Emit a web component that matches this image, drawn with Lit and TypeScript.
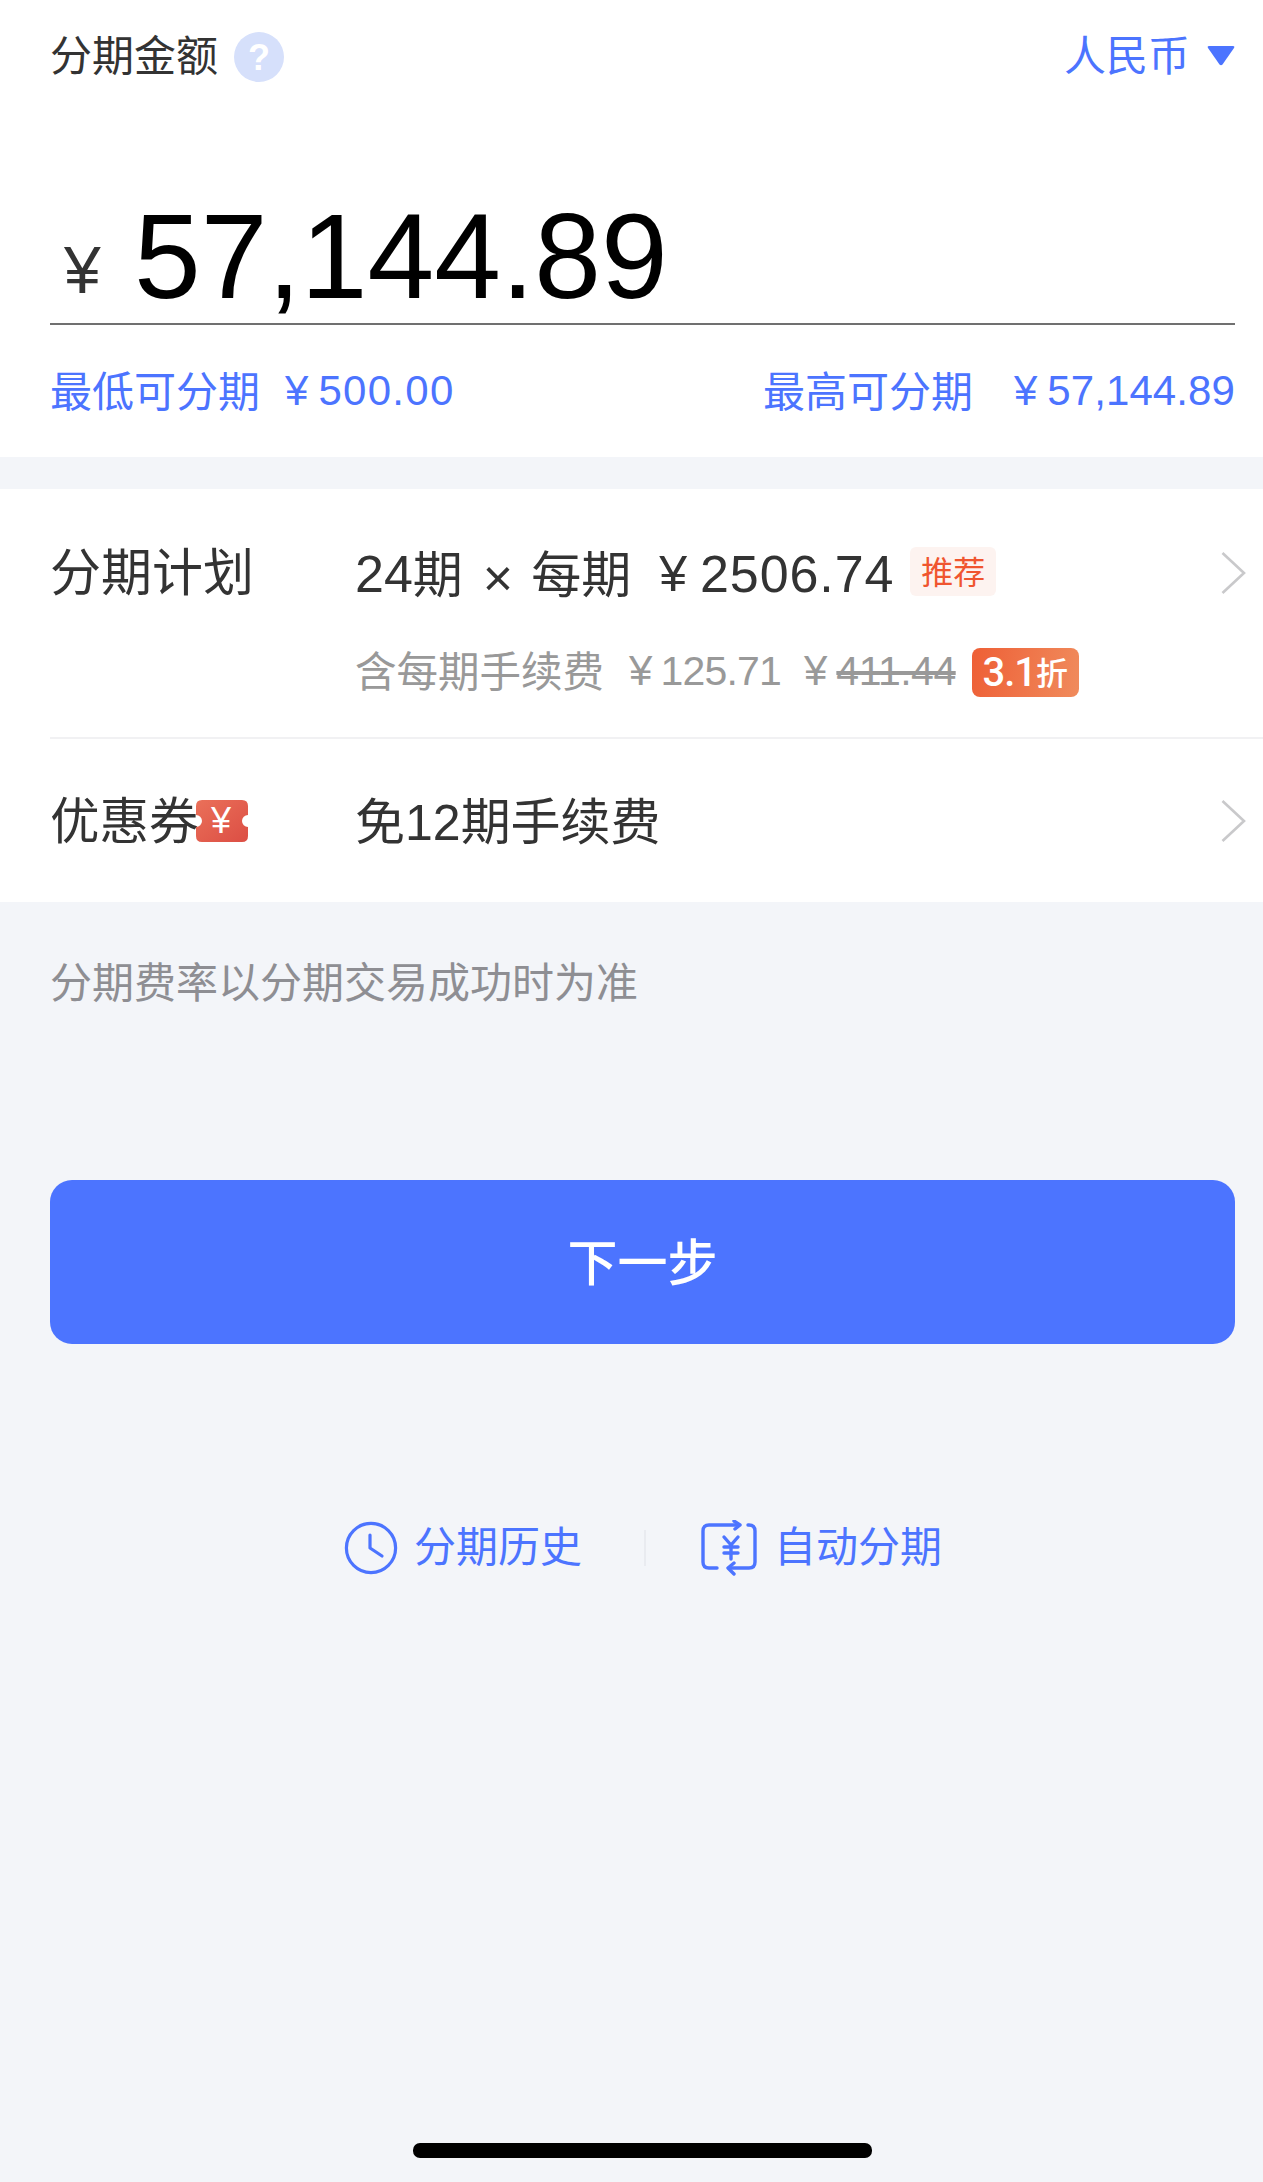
import { LitElement, html, css } from "lit";
import { customElement } from "lit/decorators.js";

const chevron = html`<svg class="chev" width="28" height="44" viewBox="0 0 28 44"><path d="M3.5 2 L25 22 L3.5 42" fill="none" stroke="#c9c9cb" stroke-width="2.6"/></svg>`;

@customElement("app-root")
export class AppRoot extends LitElement {
  static styles = css`
    :host { display: block; width: 1263px; height: 2182px; overflow: hidden; background: #f3f5f9; color: #333;
      font-family: "Liberation Sans", "Noto Sans CJK SC", sans-serif; position: relative; }
    .cjk { font-family: "Noto Sans CJK SC", sans-serif; }
    .u { padding-bottom: .11em; }
    .top { background: #fff; height: 457px; padding: 0 28px 0 50px; box-sizing: border-box; }
    .head { height: 110px; display: flex; align-items: center; justify-content: space-between; font-size: 42px; }
    .head-l { display: flex; align-items: center; gap: 16px; }
    .head-l svg { margin-top: 4px; }
    .head-r { display: flex; align-items: center; gap: 17px; color: #4c74ff; }
    .head-r svg { margin-top: 3px; }
    .amount { display: flex; align-items: flex-start; padding-top: 86px; padding-bottom: 7px; border-bottom: 2px solid #707070; line-height: 120px; }
    .yen { font-size: 66px; width: 84px; margin-top: 41px; padding-left: 14px; box-sizing: border-box; color: #333; line-height: 1; }
    .num { font-size: 120px; color: #000; }
    .range { display: flex; justify-content: space-between; color: #4c74ff; font-size: 42px; line-height: 60px; padding-top: 36px; }
    .range-part { display: flex; align-items: center; height: 60px; }
    .ml { margin-right: 25px; }
    .mh { margin-right: 41px; }
    .ds { letter-spacing: 1.3px; }
    .dh { letter-spacing: 0.1px; }
    .yen-s { margin-right: 10px; }
    .panel { background: #fff; margin-top: 32px; height: 413px; display: flex; flex-direction: column; }
    .row { display: grid; grid-template-columns: 305px 1fr 44px; margin-left: 50px; box-sizing: border-box; }
    .plan { height: 250px; border-bottom: 2px solid #f1f1f3; padding-top: 50px; }
    .coupon { flex: 1; align-items: center; }
    .label { font-size: 49.5px; line-height: 64px; display: flex; align-items: center; }
    .plan .label { align-self: start; margin-top: -2px; font-size: 51px; }
    .ticket { margin-left: -3px; }
    .line1 { display: flex; align-items: center; font-size: 52px; line-height: 70px; height: 70px; }
    .c50 { font-size: 50px; }
    .x { margin: 0 18px 0 20px; padding-top: 8px; }
    .y1 { margin: 0 13px 0 28px; font-size: 50px; }
    .amt1 { letter-spacing: 0.9px; }
    .tag { margin: 0 0 5px 16px; background: #fdf3f0; color: #f0552f; font-size: 32px; line-height: 47px; height: 49px; width: 86px; text-align: center; border-radius: 6px; }
    .line2 { display: flex; align-items: center; font-size: 42px; line-height: 60px; height: 60px; color: #999; margin-top: 32px; }
    .c2 { font-size: 41.5px; }
    .ya { margin: 0 8px 0 25px; }
    .yb { margin: 0 9px 0 23px; }
    .d2 { font-size: 41px; letter-spacing: -0.8px; }
    .s { text-decoration: line-through; letter-spacing: -0.5px; }
    .off { margin: 3px 0 0 16px; width: 107px; height: 49px; border-radius: 8px; color: #fff;
      background: linear-gradient(100deg, #ee5f36, #f08b5c); display: flex; align-items: center; justify-content: center; }
    .off-n { font-family: Roboto, sans-serif; font-size: 40px; font-weight: 500; letter-spacing: -1px; }
    .off-c { font-size: 32px; font-weight: 500; }
    .chev { align-self: start; }
    .plan .chev { margin-top: 12px; }
    .coupon .chev { align-self: center; }
    .val2 { font-size: 50px; color: #333; padding-bottom: 6px; }
    .note { font-size: 42px; color: #8e8e93; padding-left: 50px; line-height: 60px; margin-top: 48px; }
    .btn { margin: 170px 28px 0 50px; height: 164px; border-radius: 22px; background: #4c74ff; color: #fff;
      font-size: 50px; font-weight: 500; display: flex; align-items: center; justify-content: center; }
    .links { margin-top: 174px; padding-left: 344px; display: flex; align-items: center; color: #4c74ff; font-size: 42px; height: 60px; }
    .link { display: flex; align-items: center; }
    .link span { padding-bottom: .2em; }
    .g1 { gap: 16px; }
    .g2 { gap: 17px; }
    .sep { width: 2px; height: 36px; background: #e9ebf0; margin: 0 55px 0 62px; }
    .home { position: absolute; left: 413px; top: 2143px; width: 459px; height: 15px; background: #000; border-radius: 7px; }
  `;

  render() {
    return html`
      <section class="top">
        <div class="head">
          <div class="head-l cjk">
            <span class="u">分期金额</span>
            <svg width="50" height="50" viewBox="0 0 50 50"><circle cx="25" cy="25" r="25" fill="#d6e0fb"/><text x="25" y="38" text-anchor="middle" font-family="Liberation Sans" font-weight="700" font-size="36" fill="#fff">?</text></svg>
          </div>
          <div class="head-r cjk">
            <span class="u">人民币</span>
            <svg width="28" height="20" viewBox="0 0 28 20"><path d="M2 0 H26 Q28 0 27 2 L15.5 18.5 Q14 20 12.5 18.5 L1 2 Q0 0 2 0Z" fill="#4c74ff"/></svg>
          </div>
        </div>
        <div class="amount"><span class="yen">¥</span><span class="num">57,144.89</span></div>
        <div class="range">
          <div class="range-part"><span class="cjk u ml">最低可分期</span><span class="yen-s">¥</span><span class="ds">500.00</span></div>
          <div class="range-part"><span class="cjk u mh">最高可分期</span><span class="yen-s">¥</span><span class="dh">57,144.89</span></div>
        </div>
      </section>

      <section class="panel">
        <div class="row plan">
          <div class="label cjk">分期计划</div>
          <div>
            <div class="line1">
              <span>24</span><span class="cjk u c50">期</span><span class="x">×</span><span class="cjk u c50">每期</span><span class="y1">¥</span><span class="amt1">2506.74</span>
              <span class="tag cjk">推荐</span>
            </div>
            <div class="line2">
              <span class="cjk u c2">含每期手续费</span><span class="ya">¥</span><span class="d2">125.71</span><span class="yb">¥</span><span class="d2 s">411.44</span>
              <span class="off"><span class="off-n">3.1</span><span class="cjk u off-c">折</span></span>
            </div>
          </div>
          ${chevron}
        </div>
        <div class="row coupon">
          <div class="label">
            <span class="cjk u">优惠券</span>
            <svg class="ticket" width="52" height="42" viewBox="0 0 52 42">
              <defs><linearGradient id="tk" x1="0" y1="0" x2="1" y2="1"><stop offset="0" stop-color="#ea7059"/><stop offset="1" stop-color="#dc4e44"/></linearGradient></defs>
              <path d="M6 0 H46 Q52 0 52 6 V15 A6 6 0 0 0 52 27 V36 Q52 42 46 42 H6 Q0 42 0 36 V27 A6 6 0 0 0 0 15 V6 Q0 0 6 0Z" fill="url(#tk)"/>
              <text x="25" y="33" text-anchor="middle" font-family="Liberation Sans" font-size="36" fill="#fff">¥</text>
            </svg>
          </div>
          <div class="val2"><span class="cjk">免</span><span>12</span><span class="cjk">期手续费</span></div>
          ${chevron}
        </div>
      </section>

      <div class="note cjk">分期费率以分期交易成功时为准</div>
      <div class="btn cjk"><span class="u">下一步</span></div>

      <div class="links">
        <div class="link g1">
          <svg width="54" height="54" viewBox="0 0 54 54" fill="none" stroke="#4c74ff" stroke-width="3.2" stroke-linecap="round" stroke-linejoin="round"><circle cx="27" cy="27" r="24.6"/><path d="M26 14 V27 L38 35"/></svg>
          <span class="cjk">分期历史</span>
        </div>
        <div class="sep"></div>
        <div class="link g2">
          <svg width="56" height="56" viewBox="0 0 56 56" fill="none" stroke="#4c74ff" stroke-width="3.4" stroke-linecap="round" stroke-linejoin="round">
            <path d="M38 5 H8 Q2 5 2 11 V42 Q2 48 8 48 H16"/>
            <path d="M33 1 L39 5 L34 9"/>
            <path d="M28 48 H48 Q54 48 54 42 V11 Q54 5 48 5 H47"/>
            <path d="M33 43 L27 48 L33 54"/>
            <path d="M23 17 L30 25 L37 17 M23 27 H37 M23 33 H37 M30 25 V39"/>
          </svg>
          <span class="cjk">自动分期</span>
        </div>
      </div>
      <div class="home"></div>
    `;
  }
}
